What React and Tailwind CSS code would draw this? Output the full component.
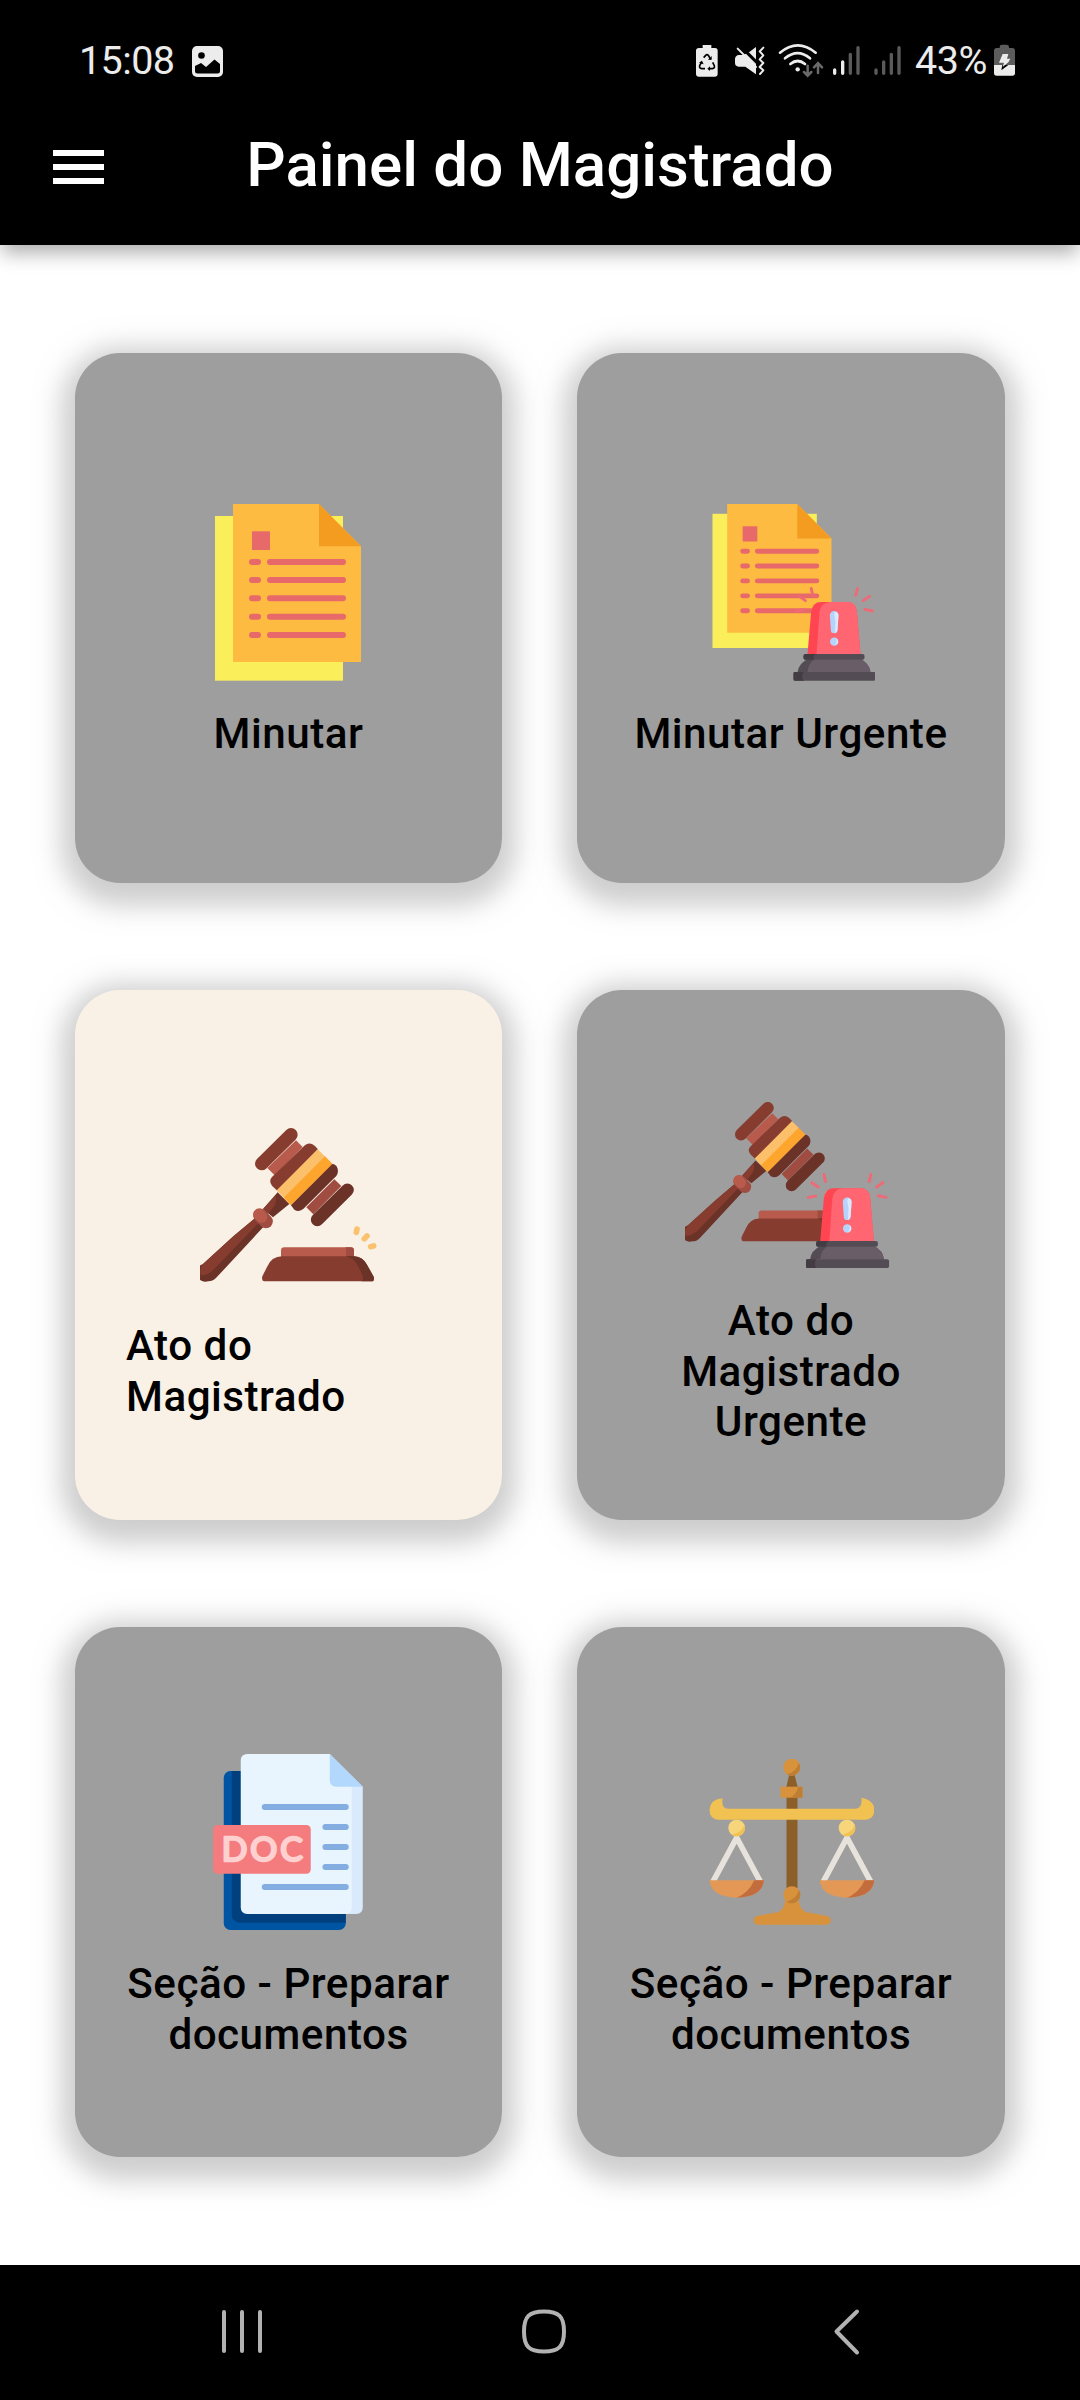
const Papers = () => (
  <g>
    <rect x="75" y="108" width="384" height="494" fill="#fbee5b" />
    <path d="M129 72H387L513 199V546H129Z" fill="#fdbb42" />
    <path d="M387 72L513 199H387Z" fill="#f39c20" />
    <rect x="186" y="154" width="54" height="56" fill="#e8696a" />
    <g stroke="#e8696a" strokeWidth="18" strokeLinecap="round">
      {[246, 300, 355, 410, 465].map((y) => (
        <path key={y} d={`M186 ${y}H204M240 ${y}H459`} />
      ))}
    </g>
  </g>
);

const Siren = () => (
  <g>
    <g stroke="#ee6a76" strokeWidth="8.5" strokeLinecap="round">
      <path d="M572 325L577 346M536 349L555 362M526 393L548 389M711 325L706 346M747 349L728 362M733 388L756 393" />
    </g>
    <path d="M561 523L572 395Q576 366 602 366H682Q706 368 709 394L720 523Z" fill="#ff4552" />
    <path d="M588 523L597 397Q600 368 628 366H682Q706 368 709 394L720 523Z" fill="#ff6671" />
    <path d="M628 406a13 13 0 0 1 26 0L651 450a10 10 0 0 1-20 0Z" fill="#b4d4fb" />
    <path d="M641 403Q642 393 648 396Q654 399 654 406L651 450Q650 457 643 459L645 425Z" fill="#dae9fc" />
    <circle cx="641" cy="485" r="12.5" fill="#b4d4fb" />
    <path d="M647 474Q654 479 653 487Q651 495 643 497Q652 485 647 474Z" fill="#dae9fc" />
    <path d="M531 577Q534 550 562 537H720Q747 550 750 577Z" fill="#544c55" />
    <path d="M561 577Q562 549 584 537H720Q747 550 750 577Z" fill="#695d68" />
    <rect x="549" y="522" width="183" height="17" rx="6" fill="#544c55" />
    <path d="M555 522H584Q577 530 579 539H555Q549 539 549 533V528Q549 522 555 522Z" fill="#433c43" />
    <rect x="519" y="576" width="246" height="26" rx="5" fill="#544c55" />
    <path d="M522 576H551Q546 577 546 583V595Q546 601 551 602H522Q519 602 519 598V580Q519 576 522 576Z" fill="#433c43" />
  </g>
);

const Gavel = () => (
  <g>
    <path d="M588 120L608 140L524 225L502 203Z" fill="#b85b4d" />
    <path d="M485 190L573 103" stroke="#863c2e" strokeWidth="40" strokeLinecap="round" />
    <path d="M532 271L516 256Q505 242 516 230L613 136Q628 123 644 136L654 147Z" fill="#863c2e" />
    <path d="M533 276L568 311L519 351L489 326Z" fill="#6b3228" />
    <path d="M526 286L489 326L504 341L523 317Q531 303 526 286Z" fill="#863c2e" />
    <path d="M653 147L676 169L552 293L530 270Z" fill="#fcc06a" />
    <path d="M675 168L698 191L573 315L551 292Z" fill="#fda52d" />
    <path d="M697 191Q708 191 713 205Q716 218 708 228L612 324Q598 337 583 328L573 315Z" fill="#6b3228" />
    <path d="M703 237L724 257L640 342L619 321Z" fill="#a04c41" />
    <path d="M652 358L742 269" stroke="#6b3228" strokeWidth="39" strokeLinecap="round" />
    <path d="M463 355L490 380L350 531Q340 543 325 543A27 27 0 0 1 309 491L400 408Z" fill="#6b3228" />
    <path d="M463 355L477 367L345 504Q325 526 302 525Q296 505 309 491L400 408Z" fill="#863c2e" />
    <path d="M480 345L498 363" stroke="#a04c41" strokeWidth="41" strokeLinecap="round" />
    <path d="M477 342L484 350" stroke="#b85b4d" strokeWidth="35" strokeLinecap="round" />
    <path d="M543 472V450Q543 441 553 441H752Q762 441 762 450V472Z" fill="#b85b4d" />
    <path d="M736 441H752Q762 441 762 450V472H738V450Q738 442 736 441Z" fill="#a04c41" />
    <path d="M487 528L501 500Q515 468 546 468H763Q788 470 800 492L821 529Q824 543 815 543H492Q484 541 487 528Z" fill="#863c2e" />
    <path d="M738 468H763Q788 470 800 492L821 529Q824 543 815 543H784Q793 540 788 526L776 500Q764 474 738 468Z" fill="#6b3228" />
    <path d="M771 386L769 396M801 407L793 415M821 437L812 439" stroke="#fac16f" strokeWidth="17" strokeLinecap="round" />
  </g>
);

const MinutarIcon = () => (
  <svg className="mr-[1px] h-[177px] w-[146px]" viewBox="75 72 438 531" fill="none">
    <Papers />
  </svg>
);

const MinutarUrgenteIcon = () => (
  <svg className="ml-[1px] h-[177px] w-[167.5px]" viewBox="262.5 72 502.5 531" fill="none">
    <g transform="translate(276 72) scale(.815) translate(-75 -72)">
      <Papers />
    </g>
    <Siren />
  </svg>
);

const AtoIcon = () => (
  <svg className="h-[154px] w-[177.5px]" viewBox="300 83 532.5 462" fill="none">
    <Gavel />
  </svg>
);

const AtoUrgenteIcon = () => (
  <svg className="h-[167px] w-[212.5px]" viewBox="75 65 637.5 501" fill="none">
    <g transform="translate(75 483) scale(.909) translate(-300 -543)">
      <Gavel />
    </g>
    <g transform="translate(438 563) scale(1.013) translate(-519 -602)">
      <Siren />
    </g>
  </svg>
);

const DocIcon = () => (
  <svg className="h-[176px] w-[151px]" viewBox="69.75 102 453 528" fill="none">
    <rect x="102" y="153" width="366" height="477" rx="20" fill="#0055a3" />
    <path d="M126 153H468V608H150Q126 606 126 584Z" fill="#00407f" />
    <path d="M400 102H420L519 200V562Q519 582 499 582H400Z" fill="#d8eafc" />
    <path d="M173 102H420L486 190V562Q486 582 466 582H173Q153 582 153 562V122Q153 102 173 102Z" fill="#e8f5ff" />
    <path d="M420 102L519 200H440Q420 200 420 180Z" fill="#b2d8fd" />
    <path d="M225 261H468M407 321H468M407 381H468M407 441H468M225 501H468" stroke="#84ade1" strokeWidth="18" strokeLinecap="round" />
    <rect x="70" y="315" width="293" height="146" rx="13" fill="#f47c7e" />
    <text x="96" y="424" fill="#ffd0d0" stroke="#ffd0d0" strokeWidth="7.5" strokeLinejoin="round" textLength="243" className="font-['Lato'] text-[101px] font-normal">DOC</text>
  </svg>
);

const Pan = ({ x }) => (
  <g transform={`translate(${x} 0)`}>
    <path d="M-71 426L0 294L71 426" stroke="#e7e3dc" strokeWidth="17" />
    <path d="M-82 422H82Q76 473 0 474Q-76 473 -82 422Z" fill="#e39955" />
    <path d="M53 422H82Q76 473 0 474Q36 460 53 422Z" fill="#c36d3f" />
    <circle cy="265" r="25" fill="#f7d57b" />
    <path d="M23 256A25 25 0 0 1-15 285Q15 280 23 256Z" fill="#f1c251" />
  </g>
);

const ScalesIcon = () => (
  <svg className="ml-[1px] h-[166px] w-[165.5px]" viewBox="55.5 58 496.5 498" fill="none">
    <path d="M296 105H312L321 140V445H288V140Z" fill="#8c5e28" />
    <circle cx="304" cy="83" r="25.5" fill="#d8923b" />
    <path d="M325 70A25.5 25.5 0 0 1 289 104Q319 96 325 70Z" fill="#be7e33" />
    <rect x="270" y="141" width="66" height="33" fill="#d8923b" />
    <path d="M323 141H336V174H299Q320 162 323 141Z" fill="#be7e33" />
    <path d="M96 176Q92 207 113 207H496Q516 205 513 174Q552 182 552 212Q550 238 526 240H82Q57 236 57 210Q60 179 96 176Z" fill="#f1c251" />
    <Pan x={138.5} />
    <Pan x={469.5} />
    <path d="M284 480H324Q328 510 346 517L406 528Q421 531 421 542Q420 555 406 555H202Q189 554 189 542Q189 530 204 528L264 517Q282 508 284 480Z" fill="#d8923b" />
    <circle cx="304" cy="465" r="25.5" fill="#d8923b" />
    <path d="M325 451A25.5 25.5 0 0 1 289 486Q319 478 325 451Z" fill="#be7e33" />
  </svg>
);

const cards = [
  { Icon: MinutarIcon, pad: "pt-[151px]", gap: "mt-[28px]", bg: "bg-[#9e9e9e]", align: "text-center", lines: ["Minutar"] },
  { Icon: MinutarUrgenteIcon, pad: "pt-[151px]", gap: "mt-[28px]", bg: "bg-[#9e9e9e]", align: "text-center", lines: ["Minutar Urgente"] },
  { Icon: AtoIcon, pad: "pt-[138px]", gap: "mt-[39px]", bg: "bg-[#faf1e6]", align: "self-start pl-[51px] text-left", lines: ["Ato do", "Magistrado"] },
  { Icon: AtoUrgenteIcon, pad: "pt-[112px]", gap: "mt-[27px]", bg: "bg-[#9e9e9e]", align: "text-center", lines: ["Ato do", "Magistrado", "Urgente"] },
  { Icon: DocIcon, pad: "pt-[127px]", gap: "mt-[29px]", bg: "bg-[#9e9e9e]", align: "text-center", lines: ["Seção - Preparar", "documentos"] },
  { Icon: ScalesIcon, pad: "pt-[132px]", gap: "mt-[34px]", bg: "bg-[#9e9e9e]", align: "text-center", lines: ["Seção - Preparar", "documentos"] },
];

const Card = ({ Icon, pad, gap, bg, align, lines }) => (
  <button className={`flex flex-col items-center rounded-[45px] shadow-[0_8.4px_25.5px_14px_rgba(158,158,158,0.5)] ${pad} ${bg}`}>
    <span className="flex shrink-0"><Icon /></span>
    <span className={`text-[42.2px] leading-[50.5px] font-medium tracking-[0.5px] text-black ${gap} ${align}`}>
      {lines.map((line) => (
        <span key={line} className="block whitespace-nowrap">{line}</span>
      ))}
    </span>
  </button>
);

const StatusIcons = () => (
  <div className="flex">
    <svg className="h-[50px] w-[35px]" viewBox="30 0 105 150" fill="none">
      <path d="M68 30H94V39H105Q113 39 113 47V116Q113 125 104 125H57Q48 125 48 116V47Q48 39 57 39H68Z" fill="#ececec" />
      <path d="M71 68L77 61Q81 57 85 61L92 73M98 82L103 92Q105 100 97 101H87M75 101H65Q57 100 59 92L65 81" stroke="#000" strokeWidth="5" />
      <path d="M84 74H95V63ZM90 94V108L82 101ZM57 83L66 77L71 88Z" fill="#000" />
    </svg>
    <svg className="h-[50px] w-[45px]" viewBox="135 0 135 150" fill="none">
      <path d="M204 54L228 36V118L196 95H176Q165 94 165 84V72Q166 61 177 60H188Z" fill="#ececec" />
      <path d="M180 32L234 86" stroke="#000" strokeWidth="9" />
      <path d="M173 41L228 96" stroke="#ececec" strokeWidth="6" strokeLinecap="round" />
      <path d="M250 38L239 49L250 61L239 73L250 84L239 96L250 106L240 117" stroke="#ececec" strokeWidth="6" strokeLinecap="round" strokeLinejoin="round" />
    </svg>
    <svg className="h-[50px] w-[57px]" viewBox="270 0 171 150" fill="none">
      <g stroke="#ececec" strokeWidth="8" strokeLinecap="round">
        <path d="M300 53Q353 9 407 53M315 70Q353 39 390 70M331 87Q353 69 375 87" />
      </g>
      <circle cx="353" cy="103" r="6.5" fill="#ececec" />
      <path d="M383 92V120M372 111L383 122L394 111M414 114V86M402 97L414 84L426 97" stroke="#6a6a6a" strokeWidth="7.5" strokeLinecap="round" />
    </svg>
    <svg className="h-[50px] w-[39px]" viewBox="441 0 117 150" fill="none" strokeWidth="10" strokeLinecap="round">
      <path d="M464 105V115M488 81V115" stroke="#ececec" />
      <path d="M511 58V115M534 38V115" stroke="#5a5a5a" />
    </svg>
    <svg className="h-[50px] w-[39px]" viewBox="558 0 117 150" fill="none" strokeWidth="10" strokeLinecap="round">
      <path d="M588 105V115M611 81V115M634 58V115M657 38V115" stroke="#5a5a5a" />
    </svg>
    <span className="w-[86px] pl-[10px] text-[39.5px] leading-[52px] tracking-[-0.5px] text-[#ececec]">43%</span>
    <svg className="h-[50px] w-[27px]" viewBox="933 0 81 150" fill="none">
      <path d="M959 36Q959 29 966 29H980Q987 29 987 36V39H997Q1005 39 1005 47V90H942V47Q942 39 950 39H959Z" fill="#5c5c5c" />
      <path d="M942 90H1005V114Q1005 122 997 122H950Q942 122 942 114Z" fill="#ececec" />
      <path d="M972 90H985L964 106L967 90Z" fill="#000" />
      <path d="M968 57H985L981 71H991L985 82L968 96L972 83H957Z" fill="#ececec" />
    </svg>
  </div>
);

export default function App() {
  return (
    <div className="flex h-[2400px] w-[1080px] flex-col overflow-hidden bg-white font-['Roboto',sans-serif]">
      <header className="relative h-[245px] shrink-0 bg-black shadow-[0_10px_18px_-2px_rgba(0,0,0,0.32)]">
        <div className="flex h-[87px] items-start justify-between pt-[35px] pr-[62px] pl-[79px]">
          <div className="flex">
            <span className="w-[113px] text-[39.5px] leading-[52px] tracking-[-0.6px] text-[#ececec]">15:08</span>
            <svg className="h-[50px] w-[32px]" viewBox="0 0 32 50" fill="none">
              <rect y="11" width="31" height="31" rx="5" fill="#ececec" />
              <circle cx="9.5" cy="20.5" r="3.3" fill="#000" />
              <path d="M3 31L9 28L14 32L22.5 24.5L28 29V36Q28 38.5 25.5 38.5H5.5Q3 38.5 3 36Z" fill="#000" />
            </svg>
          </div>
          <StatusIcons />
        </div>
        <div className="grid h-[155px] grid-cols-[220px_1fr_220px] items-center">
          <button className="ml-[53px] flex w-[51px] flex-col gap-[8px] pt-[5px]" aria-label="Menu">
            <span className="h-[6px] w-full bg-white" />
            <span className="h-[6px] w-full bg-white" />
            <span className="h-[6px] w-full bg-white" />
          </button>
          <h1 className="text-center text-[61.9px] leading-[72px] font-medium whitespace-nowrap text-white">Painel do Magistrado</h1>
        </div>
      </header>
      <main className="grid h-[2020px] shrink-0 grid-cols-[427px_428px] auto-rows-[530px] gap-x-[75px] gap-y-[107px] px-[75px] pt-[108px]">
        {cards.map((card, i) => (
          <Card key={i} {...card} />
        ))}
      </main>
      <nav className="relative flex h-[135px] shrink-0 items-center gap-[242px] bg-black pb-[3px] pl-[212px]">
        <svg className="h-[60px] w-[60px]" viewBox="0 0 60 60" fill="none" stroke="#b2b2b2" strokeWidth="4" strokeLinecap="round">
          <path d="M12 11V50M30 11V50M48 11V50" />
        </svg>
        <svg className="h-[60px] w-[60px]" viewBox="0 0 60 60" fill="none" stroke="#b2b2b2" strokeWidth="4">
          <path d="M30 10.5C45 10.5 50 15.5 50 30.5S45 50.5 30 50.5S10 45.5 10 30.5S15 10.5 30 10.5Z" />
        </svg>
        <svg className="h-[60px] w-[60px]" viewBox="0 0 60 60" fill="none" stroke="#b2b2b2" strokeWidth="4" strokeLinecap="round" strokeLinejoin="round">
          <path d="M41 10.5L20.5 30.5L41 51.5" />
        </svg>
      </nav>
    </div>
  );
}
